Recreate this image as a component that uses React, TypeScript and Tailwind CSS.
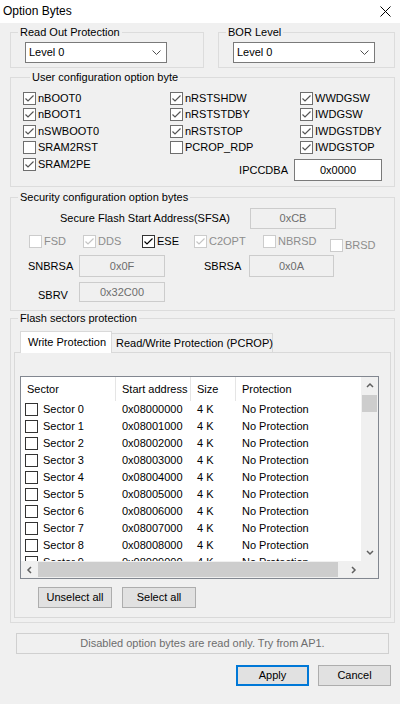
import React from 'react';

type Tone = 'user' | 'dark' | 'off';

function Box({ checked, tone = 'dark' }: { checked?: boolean; tone?: Tone }) {
  const border =
    tone === 'off' ? 'border-[#cccccc]' : tone === 'user' ? 'border-[#6e6e6e]' : 'border-[#333333]';
  const stroke = tone === 'off' ? '#c4c4c4' : tone === 'user' ? '#555555' : '#000000';
  return (
    <span className={`flex h-[13px] w-[13px] shrink-0 items-center justify-center border bg-white ${border}`}>
      {checked && (
        <svg width="11" height="11" viewBox="0 0 11 11">
          <path d="M1.5 5.5 L4 8 L9.5 2.5" fill="none" stroke={stroke} strokeWidth="1.2" />
        </svg>
      )}
    </span>
  );
}

function Check({
  label,
  checked,
  tone = 'user',
  className = '',
}: {
  label: string;
  checked?: boolean;
  tone?: Tone;
  className?: string;
}) {
  return (
    <div className={`flex items-center gap-[2px] whitespace-nowrap ${className}`}>
      <Box checked={checked} tone={tone} />
      <span className={tone === 'off' ? 'text-[#8d8d8d]' : ''}>{label}</span>
    </div>
  );
}

function Group({
  title,
  className = '',
  children,
}: {
  title: string;
  className?: string;
  children: React.ReactNode;
}) {
  return (
    <fieldset className={`border border-[#dcdcdc] ${className}`}>
      <legend className="ml-[7px] px-[2px] leading-[13px]">{title}</legend>
      {children}
    </fieldset>
  );
}

function Combo() {
  return (
    <div className="ml-[14px] flex h-[21px] w-[142px] items-center justify-between border border-[#7a7a7a] bg-white pl-[3px] pr-[5px]">
      <span>Level 0</span>
      <svg width="9" height="5" viewBox="0 0 9 5">
        <path d="M0.5 0.5 L4.5 4.5 L8.5 0.5" fill="none" stroke="#505050" />
      </svg>
    </div>
  );
}

function Field({ value, className = '', enabled }: { value: string; className?: string; enabled?: boolean }) {
  return (
    <div
      className={`flex shrink-0 items-center justify-center border ${
        enabled ? 'border-[#7a7a7a] bg-white text-black' : 'border-[#cccccc] text-[#6d6d6d]'
      } ${className}`}
    >
      {value}
    </div>
  );
}

function Btn({ children, primary }: { children: React.ReactNode; primary?: boolean }) {
  return (
    <button
      className={`flex h-[21px] w-[73px] items-center justify-center bg-[#e1e1e1] ${
        primary ? 'border-2 border-[#0078d7]' : 'border border-[#adadad]'
      }`}
    >
      {children}
    </button>
  );
}

function Arrow({ dir }: { dir: 'up' | 'down' | 'left' | 'right' }) {
  const d = {
    up: 'M1 5 L4 2 L7 5',
    down: 'M1 2 L4 5 L7 2',
    left: 'M5 1 L2 4 L5 7',
    right: 'M3 1 L6 4 L3 7',
  }[dir];
  return (
    <svg width="8" height="8" viewBox="0 0 8 8">
      <path d={d} fill="none" stroke="#606060" strokeWidth="1.5" />
    </svg>
  );
}

const sectors = Array.from({ length: 10 }, (_, i) => ({
  name: `Sector ${i}`,
  addr: `0x0800${i.toString(16).toUpperCase()}000`,
}));

export default function App() {
  return (
    <div className="h-[704px] w-[400px] overflow-hidden bg-[#f0f0f0] font-['Liberation_Sans',Arial,sans-serif] text-[11px] leading-[13px] text-black">
      <div className="flex h-[23px] items-center justify-between bg-white pl-[3px] pr-[9px]">
        <span className="text-[12px]">Option Bytes</span>
        <svg width="11" height="11" viewBox="0 0 11 11">
          <path d="M0.5 0.5 L10.5 10.5 M10.5 0.5 L0.5 10.5" stroke="#000" strokeWidth="1" />
        </svg>
      </div>

      <div className="ml-[10px] w-[385px]">
        <div className="mt-[3px] flex gap-[14px]">
          <Group title="Read Out Protection" className="w-[194px] pb-[4px] pt-[3px]">
            <Combo />
          </Group>
          <Group title="BOR Level" className="w-[177px] pb-[4px] pt-[3px]">
            <Combo />
          </Group>
        </div>

        <Group title="User configuration option byte" className="mt-[3px] pb-[5px] pl-[12px] pt-[6px]">
          {[
            ['nBOOT0', true, 'nRSTSHDW', true, 'WWDGSW', true],
            ['nBOOT1', true, 'nRSTSTDBY', true, 'IWDGSW', true],
            ['nSWBOOT0', true, 'nRSTSTOP', true, 'IWDGSTDBY', true],
            ['SRAM2RST', false, 'PCROP_RDP', false, 'IWDGSTOP', true],
          ].map((r) => (
            <div key={r[0] as string} className="flex h-[16.5px] items-center">
              <Check label={r[0] as string} checked={r[1] as boolean} className="w-[147px]" />
              <Check label={r[2] as string} checked={r[3] as boolean} className="w-[130px]" />
              <Check label={r[4] as string} checked={r[5] as boolean} />
            </div>
          ))}
          <div className="flex items-start">
            <Check label="SRAM2PE" checked className="h-[16.5px] w-[147px]" />
            <div className="mt-[3px] flex flex-1 items-center justify-end gap-[6px] pr-[12px]">
              <span>IPCCDBA</span>
              <Field value="0x0000" enabled className="h-[22px] w-[88px]" />
            </div>
          </div>
        </Group>

        <Group title="Security configuration option bytes" className="mt-[4px] pb-[8px] pt-[4px]">
          <div className="flex h-[21px] items-center pl-[49px]">
            <span className="w-[190px] whitespace-nowrap">Secure Flash Start Address(SFSA)</span>
            <Field value="0xCB" className="h-[21px] w-[86px]" />
          </div>
          <div className="mt-[4px] flex h-[21px] items-start pl-[18px]">
            <Check label="FSD" tone="off" className="w-[54px] pt-[2px]" />
            <Check label="DDS" tone="off" checked className="w-[59px] pt-[2px]" />
            <Check label="ESE" tone="dark" checked className="w-[52px] pt-[2px]" />
            <Check label="C2OPT" tone="off" checked className="w-[69px] pt-[2px]" />
            <Check label="NBRSD" tone="off" className="w-[67px] pt-[2px]" />
            <Check label="BRSD" tone="off" className="pt-[6px]" />
          </div>
          <div className="mt-[1px] flex h-[22px] items-center pl-[17px]">
            <span className="w-[51px]">SNBRSA</span>
            <Field value="0x0F" className="h-[22px] w-[86px]" />
            <span className="ml-[39px] w-[45px]">SBRSA</span>
            <Field value="0x0A" className="h-[22px] w-[85px]" />
          </div>
          <div className="mt-[5px] flex h-[20px] items-start pl-[27px]">
            <span className="w-[41px] pt-[7px]">SBRV</span>
            <Field value="0x32C00" className="h-[20px] w-[86px]" />
          </div>
        </Group>

        <Group title="Flash sectors protection" className="mt-[1px] pb-[4px] pt-[6px]">
          <div className="mx-[3px]">
            <div className="flex items-end pl-[6px]">
              <div className="relative z-10 -mb-px flex h-[22px] w-[92px] items-center whitespace-nowrap border border-b-0 border-[#d9d9d9] bg-white pl-[7px]">
                Write Protection
              </div>
              <div className="flex h-[19px] w-[161px] items-center whitespace-nowrap border border-b-0 border-l-0 border-[#d9d9d9] pl-[4px]">
                Read/Write Protection (PCROP)
              </div>
            </div>
            <div className="border border-[#d9d9d9] pb-[9px] pt-[23px]">
              <div className="ml-[5px] w-[359px] border border-[#828790] bg-white">
                <div className="flex h-[184px]">
                  <div className="w-[340px] overflow-hidden">
                    <div className="flex h-[24px]">
                      <div className="flex w-[95px] items-center border-r border-[#e5e5e5] pl-[6px]">Sector</div>
                      <div className="flex w-[75px] items-center whitespace-nowrap border-r border-[#e5e5e5] pl-[6px]">
                        Start address
                      </div>
                      <div className="flex w-[45px] items-center border-r border-[#e5e5e5] pl-[6px]">Size</div>
                      <div className="flex items-center pl-[6px]">Protection</div>
                    </div>
                    {sectors.map((s) => (
                      <div key={s.name} className="flex h-[17px] shrink-0 items-center">
                        <div className="flex w-[95px] items-center gap-[5px] pl-[4px]">
                          <Box tone="dark" />
                          <span>{s.name}</span>
                        </div>
                        <div className="w-[75px] pl-[6px]">{s.addr}</div>
                        <div className="w-[45px] pl-[6px]">4 K</div>
                        <div className="pl-[6px]">No Protection</div>
                      </div>
                    ))}
                  </div>
                  <div className="flex w-[17px] flex-col bg-[#f0f0f0]">
                    <div className="flex h-[17px] items-center justify-center">
                      <Arrow dir="up" />
                    </div>
                    <div className="mx-auto mt-[1px] h-[17px] w-[15px] bg-[#cdcdcd]" />
                    <div className="flex-1" />
                    <div className="flex h-[17px] items-center justify-center">
                      <Arrow dir="down" />
                    </div>
                  </div>
                </div>
                <div className="flex h-[17px] bg-[#f0f0f0]">
                  <div className="flex w-[17px] items-center justify-center">
                    <Arrow dir="left" />
                  </div>
                  <div className="flex w-[306px] items-center">
                    <div className="h-[15px] w-[300px] bg-[#cdcdcd]" />
                  </div>
                  <div className="flex w-[17px] items-center justify-center">
                    <Arrow dir="right" />
                  </div>
                  <div className="w-[17px]" />
                </div>
              </div>
              <div className="ml-[23px] mt-[8px] flex gap-[10px]">
                <button className="flex h-[21px] w-[74px] items-center justify-center border border-[#adadad] bg-[#e1e1e1]">
                  Unselect all
                </button>
                <button className="flex h-[21px] w-[74px] items-center justify-center border border-[#adadad] bg-[#e1e1e1]">
                  Select all
                </button>
              </div>
            </div>
          </div>
        </Group>

        <div className="ml-[6px] mt-[10px] flex h-[21px] w-[373px] items-center justify-center border border-[#d0d0d0] text-[#6d6d6d]">
          Disabled option bytes are read only. Try from AP1.
        </div>

        <div className="mt-[11px] flex justify-end gap-[9px] pr-[4px]">
          <Btn primary>Apply</Btn>
          <Btn>Cancel</Btn>
        </div>
      </div>
    </div>
  );
}
